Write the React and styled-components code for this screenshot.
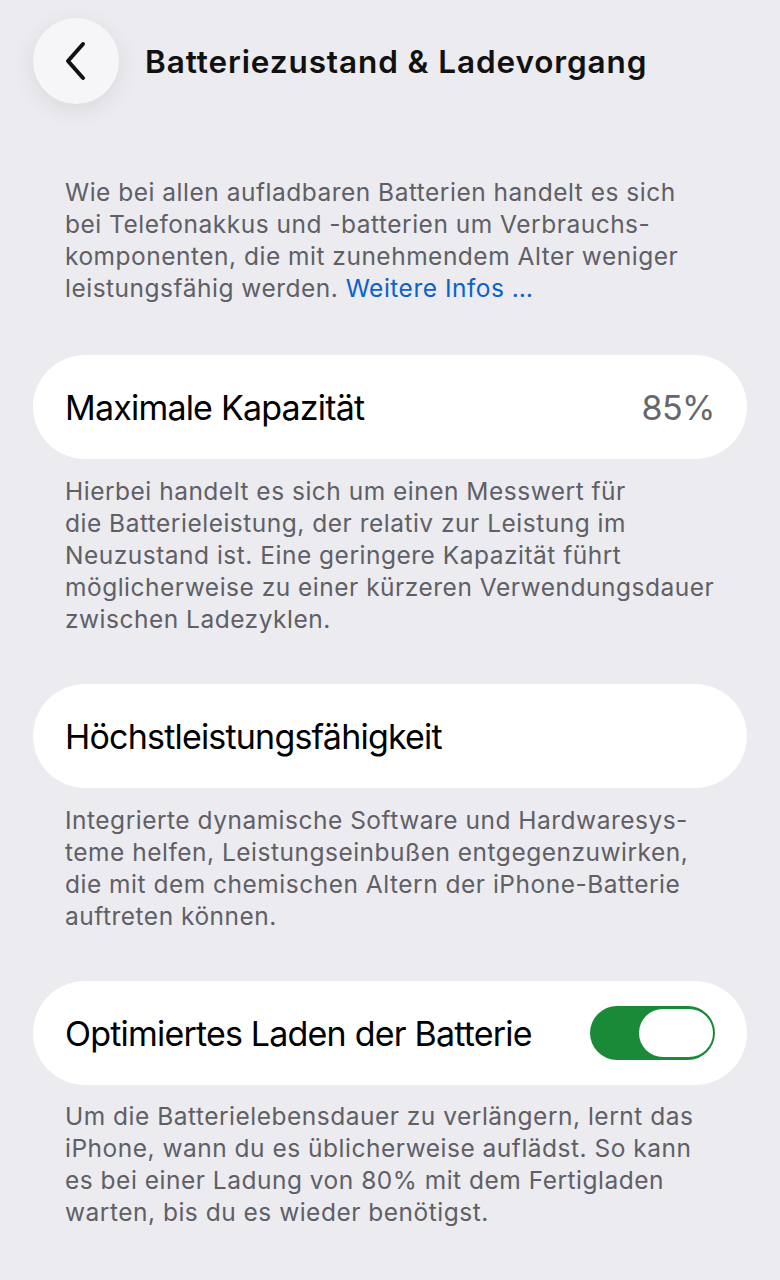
import React from "react";
import styled, { createGlobalStyle } from "styled-components";

const Global = createGlobalStyle`
  html, body { margin: 0; padding: 0; background: #ebebf0; }
  body { font-family: Inter, "Noto Sans", sans-serif; -webkit-font-smoothing: antialiased; }
`;

const Page = styled.div`
  width: 780px;
  min-height: 1280px;
  background: #ebebf0;
  box-sizing: border-box;
  padding: 17px 33px 0 33px;
  display: flex;
  flex-direction: column;
`;

const Header = styled.header`
  display: flex;
  align-items: center;
  gap: 26px;
  height: 88px;
`;

const BackButton = styled.button`
  width: 86px;
  height: 86px;
  border-radius: 50%;
  border: none;
  background: #f6f6f8;
  box-shadow: 0 6px 24px rgba(0, 0, 0, 0.08);
  display: flex;
  align-items: center;
  justify-content: center;
  padding: 0;
  flex-shrink: 0;
`;

const Title = styled.h1`
  margin: 0;
  font-size: 31.5px;
  font-weight: 600;
  color: #111;
  letter-spacing: 0.9px;
`;

const Note = styled.p`
  margin: ${(p) => p.$mt || 0}px 0 0 32px;
  font-size: 24.5px;
  line-height: 32px;
  color: #5f5f65;
  letter-spacing: 0.5px;
  white-space: nowrap;
`;

const Link = styled.a`
  color: #0a63c9;
  text-decoration: none;
`;

const Card = styled.div`
  margin-top: ${(p) => p.$mt}px;
  height: 104px;
  border-radius: 52px;
  background: #fff;
  display: flex;
  align-items: center;
  justify-content: space-between;
  padding: 0 32px;
`;

const Label = styled.span`
  font-size: 34px;
  color: #000;
  letter-spacing: -0.8px;
`;

const Value = styled.span`
  font-size: 34px;
  color: #66666b;
  letter-spacing: -0.5px;
`;

const Toggle = styled.div`
  width: 125px;
  height: 54px;
  border-radius: 27px;
  background: #1a8a38;
  box-sizing: border-box;
  padding: 3px 2px;
  display: flex;
  justify-content: flex-end;
`;

const Thumb = styled.div`
  width: 74px;
  height: 48px;
  border-radius: 24px;
  background: #fff;
`;

export default function App() {
  return (
    <>
      <Global />
      <Page>
        <Header>
          <BackButton aria-label="Zurück">
            <svg width="30" height="40" viewBox="0 0 30 40" fill="none">
              <path d="M22 3 L7 20 L22 37" stroke="#111" strokeWidth="4" strokeLinecap="round" strokeLinejoin="round" />
            </svg>
          </BackButton>
          <Title>Batteriezustand &amp; Ladevorgang</Title>
        </Header>
        <Note $mt={71}>
          Wie bei allen aufladbaren Batterien handelt es sich<br />
          bei Telefonakkus und -batterien um Verbrauchs-<br />
          komponenten, die mit zunehmendem Alter weniger<br />
          leistungsfähig werden. <Link href="#">Weitere Infos …</Link>
        </Note>
        <Card $mt={51}>
          <Label>Maximale Kapazität</Label>
          <Value>85%</Value>
        </Card>
        <Note $mt={16}>
          Hierbei handelt es sich um einen Messwert für<br />
          die Batterieleistung, der relativ zur Leistung im<br />
          Neuzustand ist. Eine geringere Kapazität führt<br />
          möglicherweise zu einer kürzeren Verwendungsdauer<br />
          zwischen Ladezyklen.
        </Note>
        <Card $mt={49}>
          <Label>Höchstleistungsfähigkeit</Label>
        </Card>
        <Note $mt={16}>
          Integrierte dynamische Software und Hardwaresys-<br />
          teme helfen, Leistungseinbußen entgegenzuwirken,<br />
          die mit dem chemischen Altern der iPhone-Batterie<br />
          auftreten können.
        </Note>
        <Card $mt={49}>
          <Label>Optimiertes Laden der Batterie</Label>
          <Toggle>
            <Thumb />
          </Toggle>
        </Card>
        <Note $mt={15}>
          Um die Batterielebensdauer zu verlängern, lernt das<br />
          iPhone, wann du es üblicherweise auflädst. So kann<br />
          es bei einer Ladung von 80% mit dem Fertigladen<br />
          warten, bis du es wieder benötigst.
        </Note>
      </Page>
    </>
  );
}
